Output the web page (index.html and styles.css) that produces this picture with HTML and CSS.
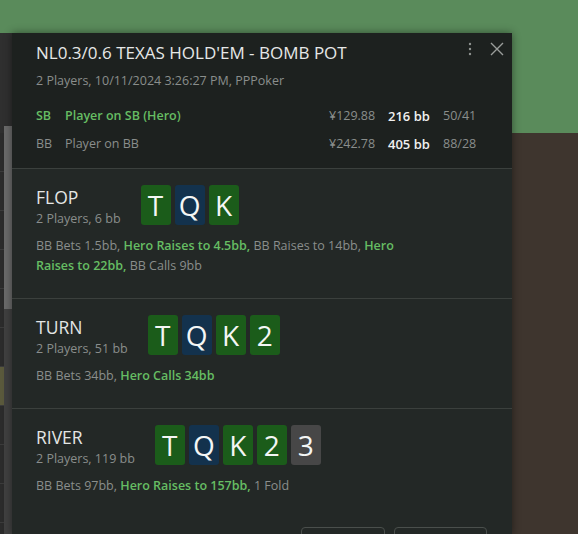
FILE: index.html
```html
<!DOCTYPE html>
<html lang="en">
<head>
    <meta charset="UTF-8">
    <meta name="viewport" content="width=device-width, initial-scale=1.0">
    <title>Hand Details</title>
    <link rel="stylesheet" href="styles.css">
</head>
<body>
    <div class="app">
        <div class="topbar"></div>
        <div class="main">
            <div class="hand-list">
                <div class="rows">
                    <div class="rows-head"></div>
                    <div class="row"></div>
                    <div class="row"></div>
                    <div class="row"></div>
                    <div class="row"></div>
                    <div class="row"></div>
                    <div class="row"></div>
                    <div class="row selected"></div>
                    <div class="row"></div>
                    <div class="row"></div>
                    <div class="row"></div>
                </div>
                <div class="scrollbar">
                    <div class="scroll-head"></div>
                    <div class="thumb"></div>
                </div>
            </div>
            <div class="table-area">
                <div class="felt"></div>
            </div>
        </div>
    </div>

    <div class="hand-popup">
        <div class="popup-header">
            <div class="title-row">
                <h1 class="hand-title">NL0.3/0.6 TEXAS HOLD'EM - BOMB POT</h1>
                <div class="popup-tools">
                    <svg class="kebab" width="4" height="14" viewBox="0 0 4 14">
                        <circle cx="2" cy="2" r="1.2"/>
                        <circle cx="2" cy="7" r="1.2"/>
                        <circle cx="2" cy="12" r="1.2"/>
                    </svg>
                    <svg class="close" width="14" height="14" viewBox="0 0 14 14">
                        <path d="M1 1 L13 13 M13 1 L1 13"/>
                    </svg>
                </div>
            </div>
            <p class="hand-meta">2 Players, 10/11/2024 3:26:27 PM, PPPoker</p>
            <div class="players">
                <div class="player hero">
                    <span class="pos">SB</span>
                    <span class="name">Player on SB (Hero)</span>
                    <span class="stack">¥129.88</span>
                    <span class="bb">216 bb</span>
                    <span class="stats">50/41</span>
                </div>
                <div class="player">
                    <span class="pos">BB</span>
                    <span class="name">Player on BB</span>
                    <span class="stack">¥242.78</span>
                    <span class="bb">405 bb</span>
                    <span class="stats">88/28</span>
                </div>
            </div>
        </div>

        <div class="street">
            <div class="street-top">
                <div class="street-label">
                    <div class="street-name">FLOP</div>
                    <div class="street-info">2 Players, 6 bb</div>
                </div>
                <div class="board">
                    <div class="card club">T</div>
                    <div class="card diamond">Q</div>
                    <div class="card club">K</div>
                </div>
            </div>
            <p class="actions">BB Bets 1.5bb, <b>Hero Raises to 4.5bb,</b> BB Raises to 14bb, <b>Hero</b> <b>Raises to 22bb,</b> BB Calls 9bb</p>
        </div>

        <div class="street">
            <div class="street-top">
                <div class="street-label">
                    <div class="street-name">TURN</div>
                    <div class="street-info">2 Players, 51 bb</div>
                </div>
                <div class="board">
                    <div class="card club">T</div>
                    <div class="card diamond">Q</div>
                    <div class="card club">K</div>
                    <div class="card club">2</div>
                </div>
            </div>
            <p class="actions">BB Bets 34bb, <b>Hero Calls 34bb</b></p>
        </div>

        <div class="street">
            <div class="street-top">
                <div class="street-label">
                    <div class="street-name">RIVER</div>
                    <div class="street-info">2 Players, 119 bb</div>
                </div>
                <div class="board">
                    <div class="card club">T</div>
                    <div class="card diamond">Q</div>
                    <div class="card club">K</div>
                    <div class="card club">2</div>
                    <div class="card spade">3</div>
                </div>
            </div>
            <p class="actions">BB Bets 97bb, <b>Hero Raises to 157bb,</b> 1 Fold</p>
        </div>

        <div class="popup-footer">
            <button class="btn btn-share" aria-label="Share"></button>
            <button class="btn btn-replay" aria-label="Replay"></button>
        </div>
    </div>
</body>
</html>
```

FILE: styles.css
```css
html, body {
    height: 100%;
    overflow: hidden;
}
body {
    margin: 0;
    font-family: "Open Sans", "Noto Sans", sans-serif;
    background: #3e352e;
}
.app {
    display: flex;
    flex-direction: column;
    height: 100%;
}
.topbar {
    height: 33px;
    background: #5a8b5b;
}
.main {
    flex: 1;
    display: flex;
}
.hand-list {
    width: 12px;
    display: flex;
}
.rows {
    width: 4px;
    background: #2b2b2b;
}
.rows-head {
    height: 100px;
    background: #2f2f2f;
}
.row {
    height: 38px;
    border-bottom: 1px solid #3b3b3b;
}
.row.selected {
    background: #5a593c;
}
.scrollbar {
    width: 8px;
    background: #404040;
}
.scroll-head {
    height: 93px;
    background: #2f2f2f;
}
.thumb {
    height: 183px;
    background: #6a6a6a;
}
.table-area {
    flex: 1;
}
.felt {
    height: 100px;
    background: #5a8b5b;
}

/* popup */
.hand-popup {
    position: absolute;
    left: 12px;
    top: 33px;
    width: 500px;
    bottom: 0;
    overflow: hidden;
    background: #232826;
    box-shadow: 0 0 8px rgba(0, 0, 0, 0.45);
}
.popup-header {
    background: #1d211f;
    padding: 8px 24px 10px;
}
.title-row {
    display: flex;
    align-items: flex-start;
}
.hand-title {
    margin: 0;
    font-size: 17px;
    line-height: 24px;
    font-weight: 400;
    color: #e6e8e7;
}
.popup-tools {
    margin-left: auto;
    margin-right: -16px;
    margin-top: 1px;
    display: flex;
    gap: 18px;
}
.kebab {
    fill: #8f9390;
}
.close {
    stroke: #9a9d9b;
    stroke-width: 1.4;
    fill: none;
}
.hand-meta {
    margin: 7px 0 0;
    font-size: 12.5px;
    line-height: 18px;
    color: #8a8e8c;
}
.players {
    margin-top: 12px;
}
.player {
    display: grid;
    grid-template-columns: 29px 1fr 59px 55px 45px;
    font-size: 12.5px;
    line-height: 28px;
    color: #8a8e8c;
}
.player .bb {
    font-size: 13px;
    color: #f0f0f0;
    font-weight: 600;
}
.player.hero .pos,
.player.hero .name {
    color: #66bd63;
    font-weight: 600;
}

/* streets */
.street {
    border-top: 1px solid #3b403d;
    padding: 16px 24px 22px;
}
.street-top {
    display: flex;
    align-items: flex-start;
    gap: 20px;
}
.street-name {
    font-size: 17.5px;
    line-height: 24px;
    color: #e4e6e5;
}
.street-info {
    margin-top: 2px;
    font-size: 12.5px;
    line-height: 16px;
    color: #8a8e8c;
}
.board {
    display: flex;
    gap: 4px;
}
.card {
    width: 30px;
    height: 40px;
    border-radius: 3px;
    font-size: 28px;
    line-height: 40px;
    text-align: center;
    color: #f4f6f5;
}
.card.club { background: #1b5c1a; }
.card.diamond { background: #13324d; }
.card.spade { background: #474747; }
.actions {
    margin: 9px 0 0;
    max-width: 390px;
    font-size: 12.5px;
    line-height: 20px;
    color: #8a8e8c;
}
.actions b {
    font-weight: 600;
    color: #66bd63;
}

.popup-footer {
    display: flex;
    justify-content: flex-end;
    gap: 9px;
    padding: 9px 25px 0;
}
.btn {
    height: 32px;
    border: 1px solid #4a4f4c;
    border-radius: 4px;
    background: transparent;
}
.btn-share { width: 84px; }
.btn-replay { width: 93px; }
```
